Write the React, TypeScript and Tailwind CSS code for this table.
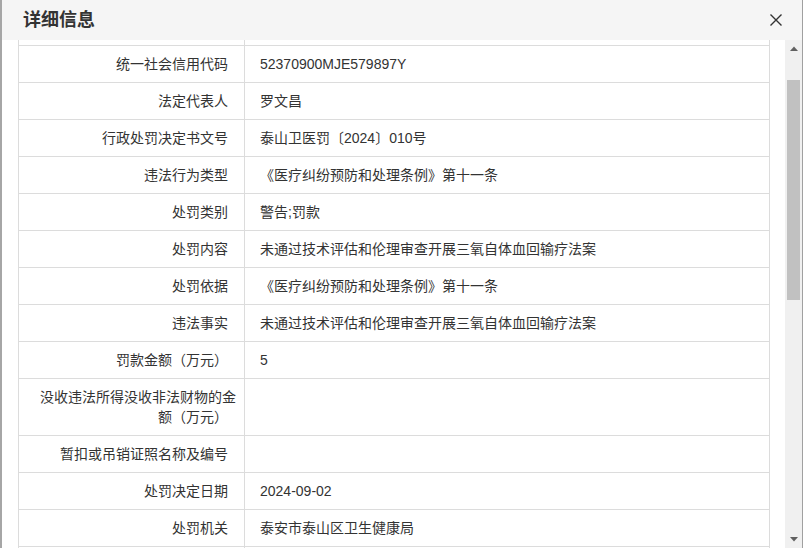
const rows: { label: React.ReactNode; value: string }[] = [
  { label: "统一社会信用代码", value: "52370900MJE579897Y" },
  { label: "法定代表人", value: "罗文昌" },
  { label: "行政处罚决定书文号", value: "泰山卫医罚〔2024〕010号" },
  { label: "违法行为类型", value: "《医疗纠纷预防和处理条例》第十一条" },
  { label: "处罚类别", value: "警告;罚款" },
  { label: "处罚内容", value: "未通过技术评估和伦理审查开展三氧自体血回输疗法案" },
  { label: "处罚依据", value: "《医疗纠纷预防和处理条例》第十一条" },
  { label: "违法事实", value: "未通过技术评估和伦理审查开展三氧自体血回输疗法案" },
  { label: "罚款金额（万元）", value: "5" },
  {
    label: (
      <>
        <span className="block whitespace-nowrap mr-[-8px]">没收违法所得没收非法财物的金</span>
        <span className="block whitespace-nowrap">额（万元）</span>
      </>
    ),
    value: "",
  },
  { label: "暂扣或吊销证照名称及编号", value: "" },
  { label: "处罚决定日期", value: "2024-09-02" },
  { label: "处罚机关", value: "泰安市泰山区卫生健康局" },
];

export default function App() {
  return (
    <div
      className="relative flex h-[548px] w-[803px] flex-col overflow-hidden border-l-2 border-r border-l-[#a6a6a6] border-r-[#a0a0a0] bg-white text-[#333]"
      style={{ fontFamily: '"Liberation Sans", "Noto Sans CJK SC", sans-serif' }}
    >
      {/* header */}
      <div className="flex h-[40px] shrink-0 items-center justify-between bg-[#f5f5f5] pl-[21px] pr-[18px]">
        <h1 className="text-[18px] font-bold leading-none text-[#333]">详细信息</h1>
        <svg width="14" height="14" viewBox="0 0 14 14" className="mr-[1px]">
          <path d="M1.5 1.5 L12.5 12.5 M12.5 1.5 L1.5 12.5" stroke="#333" strokeWidth="1.4" fill="none" />
        </svg>
      </div>

      <div className="flex min-h-0 flex-1">
        {/* table */}
        <div className="min-w-0 flex-1 overflow-hidden pl-[16px] pr-[15px]">
          <div className="border-x border-[#dcdcdc] text-[14px] leading-[20px]">
            <div className="grid h-[6px] grid-cols-[226px_1fr] border-b border-[#dcdcdc]">
              <div className="border-r border-[#dcdcdc]" />
              <div />
            </div>
            {rows.map((r, i) => (
              <div key={i} className="grid grid-cols-[226px_1fr] border-b border-[#dcdcdc]">
                <div className="border-r border-[#dcdcdc] py-2 pl-2 pr-4 text-right">{r.label}</div>
                <div className="py-2 pl-[15px] pr-4">{r.value || "\u00a0"}</div>
              </div>
            ))}
            <div className="grid h-[8px] grid-cols-[226px_1fr]">
              <div className="border-r border-[#dcdcdc]" />
              <div />
            </div>
          </div>
        </div>

        {/* scrollbar */}
        <div className="flex w-[17px] shrink-0 flex-col items-center bg-[#f0f0f0]">
          <div className="flex h-[17px] w-full items-center justify-center">
            <svg width="8" height="5" viewBox="0 0 8 5">
              <path d="M0 5 L4 0.5 L8 5 Z" fill="#606060" />
            </svg>
          </div>
          <div className="mt-[23px] h-[220px] w-[13px] bg-[#c1c1c1]" />
          <div className="flex-1" />
          <div className="flex h-[17px] w-full items-center justify-center">
            <svg width="8" height="5" viewBox="0 0 8 5">
              <path d="M0 0 L8 0 L4 4.5 Z" fill="#606060" />
            </svg>
          </div>
        </div>
      </div>
    </div>
  );
}
